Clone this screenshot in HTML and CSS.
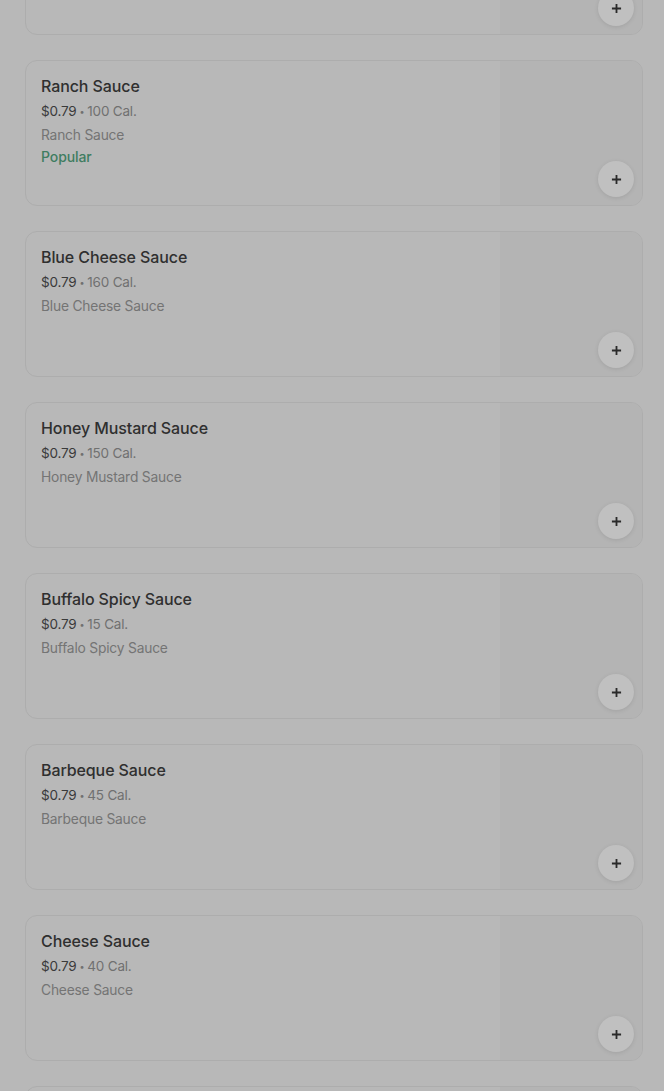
FILE: index.html
```html
<!DOCTYPE html>
<html lang="en">
<head>
<meta charset="utf-8">
<title>Sauces</title>
<link rel="stylesheet" href="styles.css">
</head>
<body>
<main class="list">
  <article class="card">
    <div class="info"></div>
    <div class="thumb"><button class="add" aria-label="Add"><svg viewBox="0 0 12 12" width="12" height="12"><path d="M6 1v10M1 6h10" stroke="currentColor" stroke-width="2"/></svg></button></div>
  </article>
  <article class="card">
    <div class="info">
      <div class="title">Ranch Sauce</div>
      <div class="meta"><span class="price">$0.79</span><span class="dot">•</span>100 Cal.</div>
      <div class="desc">Ranch Sauce</div>
      <div class="popular">Popular</div>
    </div>
    <div class="thumb"><button class="add" aria-label="Add"><svg viewBox="0 0 12 12" width="12" height="12"><path d="M6 1v10M1 6h10" stroke="currentColor" stroke-width="2"/></svg></button></div>
  </article>
  <article class="card">
    <div class="info">
      <div class="title">Blue Cheese Sauce</div>
      <div class="meta"><span class="price">$0.79</span><span class="dot">•</span>160 Cal.</div>
      <div class="desc">Blue Cheese Sauce</div>
    </div>
    <div class="thumb"><button class="add" aria-label="Add"><svg viewBox="0 0 12 12" width="12" height="12"><path d="M6 1v10M1 6h10" stroke="currentColor" stroke-width="2"/></svg></button></div>
  </article>
  <article class="card">
    <div class="info">
      <div class="title">Honey Mustard Sauce</div>
      <div class="meta"><span class="price">$0.79</span><span class="dot">•</span>150 Cal.</div>
      <div class="desc">Honey Mustard Sauce</div>
    </div>
    <div class="thumb"><button class="add" aria-label="Add"><svg viewBox="0 0 12 12" width="12" height="12"><path d="M6 1v10M1 6h10" stroke="currentColor" stroke-width="2"/></svg></button></div>
  </article>
  <article class="card">
    <div class="info">
      <div class="title">Buffalo Spicy Sauce</div>
      <div class="meta"><span class="price">$0.79</span><span class="dot">•</span>15 Cal.</div>
      <div class="desc">Buffalo Spicy Sauce</div>
    </div>
    <div class="thumb"><button class="add" aria-label="Add"><svg viewBox="0 0 12 12" width="12" height="12"><path d="M6 1v10M1 6h10" stroke="currentColor" stroke-width="2"/></svg></button></div>
  </article>
  <article class="card">
    <div class="info">
      <div class="title">Barbeque Sauce</div>
      <div class="meta"><span class="price">$0.79</span><span class="dot">•</span>45 Cal.</div>
      <div class="desc">Barbeque Sauce</div>
    </div>
    <div class="thumb"><button class="add" aria-label="Add"><svg viewBox="0 0 12 12" width="12" height="12"><path d="M6 1v10M1 6h10" stroke="currentColor" stroke-width="2"/></svg></button></div>
  </article>
  <article class="card">
    <div class="info">
      <div class="title">Cheese Sauce</div>
      <div class="meta"><span class="price">$0.79</span><span class="dot">•</span>40 Cal.</div>
      <div class="desc">Cheese Sauce</div>
    </div>
    <div class="thumb"><button class="add" aria-label="Add"><svg viewBox="0 0 12 12" width="12" height="12"><path d="M6 1v10M1 6h10" stroke="currentColor" stroke-width="2"/></svg></button></div>
  </article>
  <article class="card">
    <div class="info"></div>
    <div class="thumb"></div>
  </article>
</main>
</body>
</html>
```
FILE: styles.css
```css
html, body {
  margin: 0;
  padding: 0;
  background: #b8b8b8;
  overflow: hidden;
}
body {
  font-family: Inter, "Noto Sans", sans-serif;
  height: 1091px;
}
.list {
  display: flex;
  flex-direction: column;
  gap: 25px;
  padding: 0 21px 0 25px;
  margin-top: -111px;
}
.card {
  display: flex;
  height: 146px;
  box-sizing: border-box;
  border: 1px solid #adadad;
  border-radius: 12px;
  overflow: hidden;
  background: #b8b8b8;
}
.info {
  flex: 1;
  padding: 15px 15px;
  display: flex;
  flex-direction: column;
}
.title {
  font-size: 16px;
  line-height: 20px;
  font-weight: 500;
  color: #2f2f2f;
  letter-spacing: -0.1px;
}
.meta {
  margin-top: 5px;
  font-size: 13.5px;
  line-height: 20px;
  color: #707070;
  letter-spacing: -0.2px;
}
.price {
  color: #3a3a3a;
}
.dot {
  font-size: 9px;
  margin: 0 3px;
  vertical-align: 1px;
}
.desc {
  margin-top: 3px;
  font-size: 13.8px;
  line-height: 20px;
  color: #747474;
  letter-spacing: -0.2px;
}
.popular {
  margin-top: 2px;
  font-size: 14px;
  line-height: 20px;
  font-weight: 500;
  color: #3f7d61;
  letter-spacing: -0.1px;
}
.thumb {
  width: 142px;
  background: #b4b4b4;
  position: relative;
}
.add {
  position: absolute;
  right: 8px;
  bottom: 8px;
  width: 36px;
  height: 36px;
  border-radius: 50%;
  border: none;
  background: #c0c0c0;
  box-shadow: 0 1px 4px rgba(0,0,0,0.1);
  display: flex;
  align-items: center;
  justify-content: center;
  color: #2a2a2a;
  padding: 0;
}
.add svg {
  width: 11px;
  height: 11px;
}
```
